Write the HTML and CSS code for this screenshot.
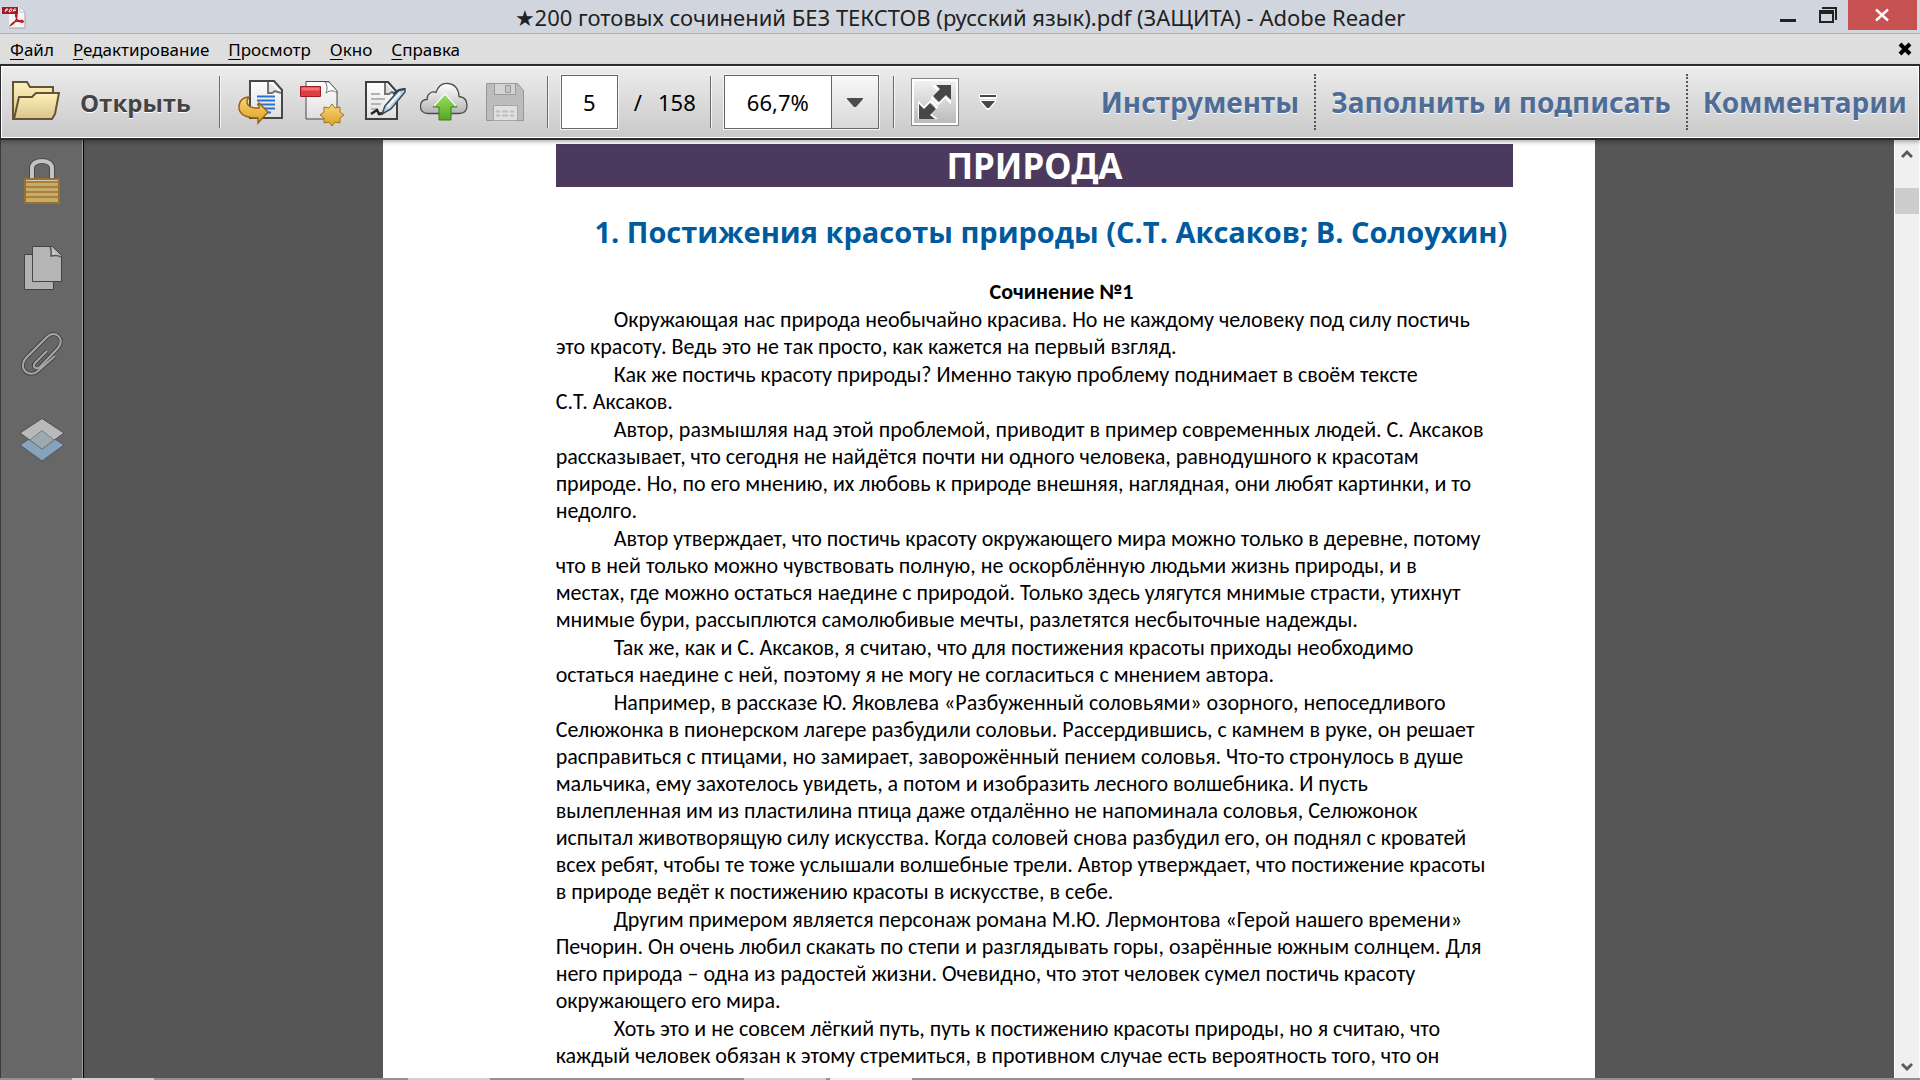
FILE: index.html
```
<!DOCTYPE html>
<html lang="ru">
<head>
<meta charset="utf-8">
<title>★200 готовых сочинений БЕЗ ТЕКСТОВ (русский язык).pdf (ЗАЩИТА) - Adobe Reader</title>
<link rel="stylesheet" href="styles.css">
</head>
<body>
<div class="app">
  <header class="titlebar">
    <svg class="app-icon" viewBox="0 0 24 24" aria-hidden="true">
      <path d="M7 1h11l5 5v16H7z" fill="#f6f6f6"/>
      <path d="M7 22h16V6" fill="none" stroke="#a3a3a3" stroke-width="1"/>
      <path d="M18 1v5h5z" fill="#fff" stroke="#b9bcc2" stroke-width="1"/>
      <path d="M9 19c4-2 6-6 6-10-1-2-2 0-1 2 1 3 4 6 7 5 1-1-1-2-4-1-3 0-6 1-8 4z" fill="none" stroke="#c01720" stroke-width="1.4"/>
      <path d="M0 1h16v7H0z" fill="#a31a26"/>
      <path d="M3 6l1-3h2l-1 1.500H4M7 6l1-3h2l-1 2.500zM11 6l1-3h2M12 4.500h2" stroke="#f3dadb" stroke-width="1" fill="none"/>
    </svg>
    <h1 class="window-title">★200 готовых сочинений БЕЗ ТЕКСТОВ (русский язык).pdf (ЗАЩИТА) - Adobe Reader</h1>
    <div class="window-buttons">
      <button class="win-btn" aria-label="Свернуть"><svg viewBox="0 0 44 30"><path d="M8 19h16v3H8z" fill="#222"/></svg></button>
      <button class="win-btn restore" aria-label="Свернуть в окно"><svg viewBox="0 0 32 30"><path d="M3 10h15v13H3zM5 14v7h11v-7z" fill="#222" fill-rule="evenodd"/><path d="M6 7h15v13h-2V9H6z" fill="#222"/></svg></button>
      <button class="win-btn close" aria-label="Закрыть"><svg viewBox="0 0 69 30"><path d="M28 9.500l12 11M40 9.500l-12 11" stroke="#fff" stroke-width="2.400"/></svg></button>
    </div>
  </header>

  <nav class="menubar">
    <a href="#file"><u>Ф</u>айл</a>
    <a href="#edit"><u>Р</u>едактирование</a>
    <a href="#view"><u>П</u>росмотр</a>
    <a href="#window"><u>О</u>кно</a>
    <a href="#help"><u>С</u>правка</a>
    <button class="close-doc" aria-label="Закрыть документ"><svg viewBox="0 0 14 14"><path d="M2 2l10 10M12 2L2 12" stroke="#000" stroke-width="4"/></svg></button>
  </nav>

  <div class="toolbar">
    <button class="open-btn">
      <svg class="icon" viewBox="0 0 48 48" aria-hidden="true">
        <defs><linearGradient id="fold" x1="0" y1="0" x2="0" y2="1"><stop offset="0" stop-color="#fff1bb"/><stop offset="1" stop-color="#d8c489"/></linearGradient></defs>
        <path d="M1 4h14l3 5h23v7L36 41H1z" fill="url(#fold)" stroke="#625436" stroke-width="2"/>
        <path d="M7 19h13l4-4h23l-4 21-3 5H2z" fill="url(#fold)" stroke="#625436" stroke-width="2"/>
      </svg>
      <span>Открыть</span>
    </button>
    <span class="sep"></span>
    <div class="tools">
      <button class="tool" aria-label="Преобразовать файл"><svg class="icon" viewBox="0 0 48 48">
        <defs><linearGradient id="paper" x1="0" y1="0" x2="0" y2="1"><stop offset="0" stop-color="#fff"/><stop offset="1" stop-color="#dedede"/></linearGradient>
        <linearGradient id="gold" x1="0" y1="0" x2="0" y2="1"><stop offset="0" stop-color="#f8d878"/><stop offset="1" stop-color="#dc9f26"/></linearGradient></defs>
        <path d="M13 3h24l8 9v28H13z" fill="url(#paper)" stroke="#484848" stroke-width="2"/>
        <path d="M31 4v11h4l3-2 6 2" fill="#e4e4e4" stroke="#747474" stroke-width="2"/>
        <path d="M20 18.500h18M20 22.500h18M20 26.500h18M20 30.500h18M30 34.500h4" stroke="#2674cf" stroke-width="2"/>
        <path d="M2 29c0-6 4-10 10-10-4 5-2 10 6 11h4v-5l9 9-10 11v-5C9 40 2 37 2 29z" fill="url(#gold)" stroke="#9b6518" stroke-width="1.500"/>
      </svg></button>
      <button class="tool" aria-label="Создать PDF"><svg class="icon" viewBox="0 0 48 48">
        <path d="M8 3.500h23l8 9.500v28H8z" fill="url(#paper)" stroke="#484848"/>
        <path d="M27 4c3 4 2 8 1 11 4-3 8-3 11 0v-2L31 4z" fill="#fff" stroke="#6e6e6e"/>
        <path d="M2.500 8.500h20v10h-20z" fill="#e33a44" stroke="#a01c25"/>
        <path d="M3.500 9.500h18v3h-18z" fill="#f17279"/>
        <path d="M34 26l3 4 5-1v5l4 3-4 3v5l-5-1-3 4-3-4-5 1v-5l-4-3 4-3v-5l5 1z" fill="url(#gold)" stroke="#a5741d"/>
      </svg></button>
      <button class="tool" aria-label="Подписать"><svg class="icon" viewBox="0 0 48 48">
        <path d="M7 4h22l9 10v27H7z" fill="url(#paper)" stroke="#3f3f3f" stroke-width="2"/>
        <path d="M26 5v11h4l3-2 4 2" fill="#ddd" stroke="#747474" stroke-width="2"/>
        <path d="M12 16h9M12 21h14M12 26h10M12 31h6" stroke="#b3b3b3" stroke-width="2"/>
        <path d="M12 36l6-4 2 4 4-1" fill="none" stroke="#222" stroke-width="2.400"/>
        <path d="M23 36l3-8 14-16 6-1v3L32 31z" fill="#b9d1e3" stroke="#3d4a56" stroke-width="1.500"/>
        <path d="M28 29l13-14" stroke="#f4fbff" stroke-width="2"/>
        <path d="M34 16l6-4 6-1" fill="none" stroke="#333e48" stroke-width="2"/>
      </svg></button>
      <button class="tool" aria-label="Отправить в облако"><svg class="icon" viewBox="0 0 48 48">
        <defs><linearGradient id="cl" x1="0" y1="0" x2="0" y2="1"><stop offset="0" stop-color="#fff"/><stop offset="1" stop-color="#b4b4b4"/></linearGradient>
        <linearGradient id="gr" x1="0" y1="0" x2="0" y2="1"><stop offset="0" stop-color="#9add5e"/><stop offset="1" stop-color="#54aa22"/></linearGradient></defs>
        <path d="M8 35.500c-5 0-8-3-7.500-8 .5-4 3.500-6 6.500-6 0-5 4-9 9-7 2-6 6-9.500 12-9 7 .5 11 6 11 13 5 .5 8 4 8 9 0 5-3 8-8 8z" fill="url(#cl)" stroke="#4b4b4b" stroke-width="1.300"/>
        <path d="M25 16l12 13h-6v13H19V29h-6z" fill="url(#gr)" stroke="#3b7a1a" stroke-width="1"/>
        <path d="M14 28l11-12 11 12" fill="none" stroke="#fff" stroke-width="1.200"/>
      </svg></button>
      <button class="tool" aria-label="Сохранить" disabled><svg class="icon" viewBox="0 0 48 48">
        <path d="M5.500 5.500h31l6 7v30h-37z" fill="#bcbcbc" stroke="#969696"/>
        <path d="M13.500 5.500h21v11h-21z" fill="#d3d3d3" stroke="#999"/>
        <path d="M24.500 7.500h5v7h-5z" fill="#c4c4c4" stroke="#999"/>
        <path d="M12.500 27.500h24v15h-24z" fill="#e0e0e0" stroke="#a6a6a6"/>
        <path d="M15 33.500h19M15 37.500h19" stroke="#bdbdbd" stroke-width="2" stroke-dasharray="4 2 6 2"/>
      </svg></button>
    </div>
    <span class="sep"></span>
    <label class="pager"><input class="page-input" type="text" value="5" aria-label="Номер страницы"><span>/</span><span>158</span></label>
    <span class="sep"></span>
    <div class="zoom">
      <input class="zoom-input" type="text" value="66,7%" aria-label="Масштаб">
      <button class="zoom-drop" aria-label="Выбрать масштаб"><svg viewBox="0 0 16 9"><path d="M0 0h16v1L9 9H7L0 1z" fill="#4c4c4c"/></svg></button>
    </div>
    <span class="sep"></span>
    <button class="fullscreen" aria-label="Полный экран"><svg viewBox="0 0 42 42">
      <path d="M20 5h16v16l-5-5-7 7-6-6 7-7zM5 37V22l5 5 7-7 6 6-7 7 5 4z" fill="none" stroke="#fff" stroke-width="2"/>
      <path d="M22 4h15v15l-5-5-7 7-6-6 7-7zM5 38V23l5 5 6-6 6 6-6 6 5 4z" fill="#474747"/>
    </svg></button>
    <button class="more" aria-label="Настроить панель"><svg viewBox="0 0 18 18"><path d="M0 1h18v5H0zM1 7h16v2l-7 8H8L1 9z" fill="#fff"/><path d="M1 2h16v2H1zM2 8h14l-6 7H8z" fill="#474747"/></svg></button>
    <nav class="panels">
      <a href="#tools">Инструменты</a>
      <a href="#sign">Заполнить и подписать</a>
      <a href="#comments">Комментарии</a>
    </nav>
  </div>

  <div class="workspace">
    <aside class="sidebar">
      <button class="side-btn" aria-label="Защита"><svg class="icon" viewBox="0 0 48 48">
        <path d="M14 23V10c0-4 4-7 10-7s10 3 10 7v13" fill="none" stroke="#494949" stroke-width="6"/>
        <path d="M14 23V10c0-4 4-7 10-7s10 3 10 7v13" fill="none" stroke="#c3c3c3" stroke-width="4"/>
        <path d="M7 21h34v24H7z" fill="#c6ab69" stroke="#99702f" stroke-width="2"/>
        <path d="M8 24h32M8 29h32M8 34h32M8 39h32" stroke="#a8813f" stroke-width="2"/>
        <path d="M8 22.500h32" stroke="#d4c9b1"/>
      </svg></button>
      <button class="side-btn" aria-label="Страницы"><svg class="icon" viewBox="0 0 48 48">
        <path d="M6.500 10.500h29v35h-29z" fill="#b1b1b1" stroke="#444"/>
        <path d="M14.500 2.500h20l9 9v26h-29z" fill="#b5b5b5" stroke="#444"/>
        <path d="M32 3c2 3 1 6 1 9 4-1 7-1 10 1" fill="#c8c8c8" stroke="#555" stroke-width="1.500"/>
      </svg></button>
      <button class="side-btn" aria-label="Вложения"><svg class="icon" viewBox="0 0 48 48">
        <path d="M29 21L17 33c-3 4 1 7 5 4l18-19c8-9-3-19-11-11L8 28c-9 10 3 21 12 13l17-15" fill="none" stroke="#444" stroke-width="4"/>
        <path d="M29 21L17 33c-3 4 1 7 5 4l18-19c8-9-3-19-11-11L8 28c-9 10 3 21 12 13l17-15" fill="none" stroke="#a6a6a6" stroke-width="2"/>
      </svg></button>
      <button class="side-btn" aria-label="Слои"><svg class="icon" viewBox="0 0 48 48">
        <path d="M24 14.500L46 29 24 45 2 29z" fill="#86a3bb" stroke="#47596a"/>
        <path d="M24 2.500L46 17 24 33 2 17z" fill="#b9b9b9" stroke="#4e4e4e"/>
        <path d="M24 14.500L36 24 24 33 12 24z" fill="#9faaae" stroke="#717e88"/>
      </svg></button>
    </aside>
    <main class="pane">
      <article class="page">
        <h2 class="banner">ПРИРОДА</h2>
        <h3 class="topic">1. Постижения красоты природы (С.Т. Аксаков; В. Солоухин)</h3>
        <h4 class="essay-title">Сочинение №1</h4>
        <p>Окружающая нас природа необычайно красива. Но не каждому человеку под силу постичь<br>это красоту. Ведь это не так просто, как кажется на первый взгляд.</p>
        <p>Как же постичь красоту природы? Именно такую проблему поднимает в своём тексте<br>С.Т. Аксаков.</p>
        <p>Автор, размышляя над этой проблемой, приводит в пример современных людей. С. Аксаков<br>рассказывает, что сегодня не найдётся почти ни одного человека, равнодушного к красотам<br>природе. Но, по его мнению, их любовь к природе внешняя, наглядная, они любят картинки, и то<br>недолго.</p>
        <p>Автор утверждает, что постичь красоту окружающего мира можно только в деревне, потому<br>что в ней только можно чувствовать полную, не оскорблённую людьми жизнь природы, и в<br>местах, где можно остаться наедине с природой. Только здесь улягутся мнимые страсти, утихнут<br>мнимые бури, рассыплются самолюбивые мечты, разлетятся несбыточные надежды.</p>
        <p>Так же, как и С. Аксаков, я считаю, что для постижения красоты приходы необходимо<br>остаться наедине с ней, поэтому я не могу не согласиться с мнением автора.</p>
        <p>Например, в рассказе Ю. Яковлева «Разбуженный соловьями» озорного, непоседливого<br>Селюжонка в пионерском лагере разбудили соловьи. Рассердившись, с камнем в руке, он решает<br>расправиться с птицами, но замирает, заворожённый пением соловья. Что-то стронулось в душе<br>мальчика, ему захотелось увидеть, а потом и изобразить лесного волшебника. И пусть<br>вылепленная им из пластилина птица даже отдалённо не напоминала соловья, Селюжонок<br>испытал животворящую силу искусства. Когда соловей снова разбудил его, он поднял с кроватей<br>всех ребят, чтобы те тоже услышали волшебные трели. Автор утверждает, что постижение красоты<br>в природе ведёт к постижению красоты в искусстве, в себе.</p>
        <p>Другим примером является персонаж романа М.Ю. Лермонтова «Герой нашего времени»<br>Печорин. Он очень любил скакать по степи и разглядывать горы, озарённые южным солнцем. Для<br>него природа – одна из радостей жизни. Очевидно, что этот человек сумел постичь красоту<br>окружающего его мира.</p>
        <p>Хоть это и не совсем лёгкий путь, путь к постижению красоты природы, но я считаю, что<br>каждый человек обязан к этому стремиться, в противном случае есть вероятность того, что он</p>
      </article>
    </main>
    <div class="scrollbar">
      <button class="scroll-btn" aria-label="Вверх"><svg viewBox="0 0 12 10"><path d="M1 8l5-5 5 5" fill="none" stroke="#5a5a5a" stroke-width="3"/></svg></button>
      <div class="track"><div class="thumb"></div></div>
      <button class="scroll-btn down" aria-label="Вниз"><svg viewBox="0 0 12 10"><path d="M1 2l5 5 5-5" fill="none" stroke="#5a5a5a" stroke-width="3"/></svg></button>
    </div>
  </div>
  <footer class="taskbar-edge"><span class="task"></span><span class="task"></span><span class="task"></span><span class="task active"></span></footer>
</div>
</body>
</html>
```
FILE: styles.css
```
* { box-sizing: border-box; }

body {
  margin: 0;
  font-family: "Noto Sans", "Open Sans", sans-serif;
  color: #000;
}

button {
  margin: 0;
  padding: 0;
  border: 0;
  background: none;
  font: inherit;
  color: inherit;
}

svg { display: block; }

a { color: inherit; text-decoration: none; }

.icon { width: 48px; height: 48px; }

.app {
  display: flex;
  flex-direction: column;
  height: 100vh;
  overflow: hidden;
}

/* Title bar */
.titlebar {
  display: grid;
  grid-template-columns: 140px 1fr 140px;
  flex: none;
  height: 34px;
  background: #d1d6de;
  border-bottom: 1px solid #abb0b7;
}

.app-icon { width: 24px; height: 24px; margin: 6px 0 0 2px; }

.window-title {
  margin: 0;
  font-size: 22px;
  font-weight: 400;
  line-height: 34px;
  text-align: center;
  white-space: nowrap;
  color: #222;
}

.window-buttons {
  display: flex;
  justify-content: flex-end;
  padding-right: 3px;
}

.win-btn { width: 44px; height: 30px; }
.win-btn svg { height: 30px; }
.win-btn.restore { width: 38px; }
.win-btn.close { width: 69px; background: #c75050; }

/* Menu bar */
.menubar {
  display: flex;
  flex: none;
  align-items: center;
  gap: 19px;
  height: 30px;
  padding: 0 8px 0 10px;
  background: #dedede;
  font-size: 17px;
  line-height: 30px;
}

.menubar a { padding-top: 1px; }
.menubar u { text-underline-offset: 3px; }
.close-doc { margin-left: auto; }
.close-doc svg { width: 14px; height: 14px; }

/* Toolbar */
.toolbar {
  display: flex;
  flex: none;
  align-items: center;
  height: 76px;
  padding: 0 12px 0 11px;
  border: solid #2b2b2b;
  border-width: 2px 1px;
  box-shadow: inset 0 0 0 1px #fff, 0 2px 4px rgba(0, 0, 0, .3);
  background: linear-gradient(#ededed, #c9c9c9);
  position: relative;
}

.open-btn {
  display: flex;
  align-items: center;
  gap: 20px;
  margin-right: 28px;
  font-family: "Open Sans", "Noto Sans", sans-serif;
  font-size: 24px;
  font-weight: 700;
  color: #444;
  text-shadow: 0 1px #fff;
}

.sep {
  flex: none;
  width: 2px;
  height: 52px;
  background: linear-gradient(90deg, #6a6a6a 50%, #f6f6f6 50%);
}

.tools {
  display: flex;
  gap: 13px;
  margin: 0 18px 0 16px;
}

.pager {
  display: flex;
  align-items: center;
  gap: 16px;
  margin: 0 14px 0 12px;
  font-size: 22px;
}

.page-input,
.zoom-input {
  height: 54px;
  padding: 0;
  border: 1px solid #666;
  background: #fff;
  font: inherit;
  text-align: center;
  color: #000;
}

.page-input { width: 57px; box-shadow: 0 0 0 1px #f4f4f4; }

.zoom {
  display: flex;
  margin: 0 14px 0 12px;
  font-size: 22px;
  box-shadow: 0 0 0 1px #f4f4f4;
}

.zoom-input { width: 108px; }

.zoom-drop {
  display: grid;
  place-items: center;
  width: 47px;
  height: 54px;
  border: 1px solid #666;
  border-left: 0;
  background: linear-gradient(#f8f8f8, #d8d8d8);
}

.zoom-drop svg { width: 16px; height: 9px; }

.fullscreen {
  width: 48px;
  height: 48px;
  margin-left: 16px;
  border: 1px solid #888;
  background: linear-gradient(#f4f4f4, #b8b8b8);
  box-shadow: inset 0 0 0 2px #fff;
}

.fullscreen svg { width: 42px; height: 42px; margin: 2px; }
.more { margin-left: 20px; }
.more svg { width: 18px; height: 18px; }

.panels {
  display: flex;
  margin-left: auto;
  font-size: 28px;
  font-weight: 700;
  line-height: 56px;
  white-space: nowrap;
  color: #4d6d98;
  text-shadow: 0 1px #fff;
}

.panels a { padding: 0 15px; }
.panels a:last-child { padding-right: 0; }
.panels a + a { border-left: 2px dotted #555; }

/* Work area */
.workspace {
  display: flex;
  flex: 1;
  min-height: 0;
  background: #565656;
}

.sidebar {
  display: flex;
  flex: none;
  flex-direction: column;
  gap: 2px;
  width: 84px;
  border-left: 1px solid #3a3a3a;
  border-right: 1px solid #000;
  box-shadow: inset -1px 0 #a0a0a0;
  background: #676767;
}

.side-btn {
  display: grid;
  place-items: center;
  height: 84px;
}

.pane {
  flex: 1;
  min-width: 0;
  overflow: hidden;
}

.page {
  width: 67%;
  min-height: 100%;
  margin: 0 auto;
  padding: 4px 82px 0 173px;
  background: #fff;
  font-family: Carlito, Lato, sans-serif;
  font-size: 22px;
  line-height: 27px;
  white-space: nowrap;
}

.banner {
  margin: 0 0 25px;
  background: #4c3a5e;
  font-family: "Noto Sans", sans-serif;
  font-size: 35px;
  line-height: 43px;
  text-align: center;
  color: #fff;
}

.topic {
  margin: 0 0 26px;
  padding-right: 6px;
  font-family: "Open Sans", "Noto Sans", sans-serif;
  font-size: 29px;
  line-height: 40px;
  text-align: right;
  color: #005a9e;
}

.essay-title {
  margin: 0;
  font-size: 22px;
  text-align: center;
  text-indent: 54px;
}

.page p { margin: 1px 0 0; text-indent: 58px; }

/* Scroll bar */
.scrollbar {
  display: flex;
  flex: none;
  flex-direction: column;
  width: 26px;
  border: solid #fff;
  border-width: 0 1px;
  background: #f0f0f0;
}

.scroll-btn {
  display: grid;
  place-items: center;
  height: 28px;
}

.scroll-btn.down { height: 22px; }
.scroll-btn svg { width: 12px; height: 10px; }
.track { flex: 1; padding-top: 20px; }
.thumb { height: 26px; background: #cdcdcd; }

.taskbar-edge {
  display: flex;
  flex: none;
  gap: 254px;
  height: 2px;
  padding-left: 72px;
  background: #929292;
}

.task { width: 82px; background: #d0d0d0; }
.task.active { margin-left: -250px; background: #eee; }
```
